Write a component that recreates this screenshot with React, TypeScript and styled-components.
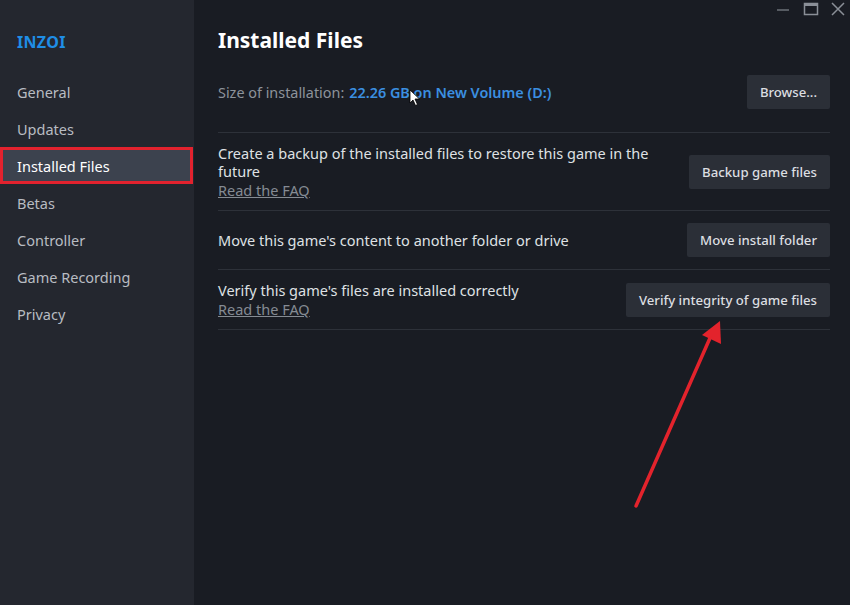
import React from "react";
import styled, { createGlobalStyle } from "styled-components";

const Global = createGlobalStyle`
  html, body { margin: 0; padding: 0; background: #191c23; }
  body { font-family: "Noto Sans", "Open Sans", Arial, sans-serif; }
  * { box-sizing: border-box; }
`;

const Shell = styled.div`
  position: relative;
  display: flex;
  width: 850px;
  height: 605px;
  overflow: hidden;
  background: #191c23;
`;

const Sidebar = styled.nav`
  width: 194px;
  flex: none;
  background: #24272f;
  padding-top: 28px;
  display: flex;
  flex-direction: column;
`;

const Logo = styled.div`
  color: #1f8ee6;
  font-weight: 700;
  font-size: 16px;
  letter-spacing: 0.3px;
  line-height: 28px;
  padding-left: 17px;
  margin-bottom: 17px;
`;

const NavItem = styled.div<{ $active?: boolean }>`
  height: 37px;
  display: flex;
  align-items: center;
  padding-left: ${(p) => (p.$active ? "14px" : "17px")};
  font-size: 14.5px;
  color: ${(p) => (p.$active ? "#ffffff" : "#b8bcc2")};
  background: ${(p) => (p.$active ? "#3c424e" : "transparent")};
  border: ${(p) => (p.$active ? "3px solid #e2222e" : "none")};
  margin-right: ${(p) => (p.$active ? "1px" : "0")};
`;

const Main = styled.main`
  flex: 1;
  padding: 26px 20px 0 24px;
  display: flex;
  flex-direction: column;
`;

const Title = styled.h1`
  margin: 0;
  font-size: 21px;
  line-height: 28px;
  font-weight: 700;
  color: #ffffff;
`;

const SizeRow = styled.div`
  margin-top: 20px;
  padding-bottom: 22px;
  display: flex;
  align-items: center;
  justify-content: space-between;
  border-bottom: 1px solid #2d3139;
`;

const SizeLabel = styled.span`
  font-size: 14.4px;
  color: #8d939b;
`;

const SizeValue = styled.span`
  color: #3b8fe0;
  font-weight: 600;
  margin-left: 5px;
`;

const Row = styled.div`
  display: flex;
  align-items: center;
  justify-content: space-between;
  padding: 11px 0 11px;
  border-bottom: 1px solid #2d3139;
  gap: 30px;
`;

const RowText = styled.div`
  font-size: 14.5px;
  line-height: 18px;
  color: #dfe1e4;
  max-width: 440px;
`;

const Faq = styled.a`
  display: block;
  margin-top: 1px;
  color: #858b93;
  text-decoration: underline;
  font-size: 14.5px;
  line-height: 18px;
`;

const Button = styled.button`
  flex: none;
  height: 34px;
  margin: 1px 0;
  padding: 0 13px;
  border: none;
  border-radius: 2px;
  background: #2b2f37;
  color: #dcdee1;
  font-family: inherit;
  font-size: 13.2px;
  font-weight: 500;
`;

const WindowControls = styled.div`
  position: absolute;
  top: 0;
  right: 0;
  display: flex;
  align-items: center;
  gap: 10px;
  padding: 1px 4px 0 0;
`;

const Arrow = styled.svg`
  position: absolute;
  left: 0;
  top: 0;
  pointer-events: none;
`;

const Cursor = styled.svg`
  position: absolute;
  left: 409px;
  top: 89px;
`;

export default function App() {
  const nav = ["General", "Updates", "Installed Files", "Betas", "Controller", "Game Recording", "Privacy"];
  return (
    <>
      <Global />
      <Shell>
        <Sidebar>
          <Logo>INZOI</Logo>
          {nav.map((n) => (
            <NavItem key={n} $active={n === "Installed Files"}>
              {n}
            </NavItem>
          ))}
        </Sidebar>
        <Main>
          <Title>Installed Files</Title>
          <SizeRow>
            <SizeLabel>
              Size of installation:<SizeValue>22.26 GB on New Volume (D:)</SizeValue>
            </SizeLabel>
            <Button>Browse...</Button>
          </SizeRow>
          <Row>
            <RowText>
              Create a backup of the installed files to restore this game in the future
              <Faq>Read the FAQ</Faq>
            </RowText>
            <Button>Backup game files</Button>
          </Row>
          <Row>
            <RowText>Move this game's content to another folder or drive</RowText>
            <Button>Move install folder</Button>
          </Row>
          <Row>
            <RowText>
              Verify this game's files are installed correctly
              <Faq>Read the FAQ</Faq>
            </RowText>
            <Button>Verify integrity of game files</Button>
          </Row>
        </Main>
        <WindowControls>
          <svg width="18" height="16" viewBox="0 0 18 16">
            <line x1="3" y1="9" x2="15" y2="9" stroke="#6b7079" strokeWidth="1.5" />
          </svg>
          <svg width="18" height="16" viewBox="0 0 18 16">
            <rect x="2.5" y="2.5" width="13" height="11" fill="none" stroke="#8a8f97" strokeWidth="1.5" />
            <line x1="2.5" y1="4" x2="15.5" y2="4" stroke="#8a8f97" strokeWidth="2" />
          </svg>
          <svg width="16" height="16" viewBox="0 0 16 16">
            <path d="M2 2 L14 14 M14 2 L2 14" stroke="#8a8f97" strokeWidth="1.5" />
          </svg>
        </WindowControls>
        <Cursor width="12" height="18" viewBox="0 0 12 18">
          <path d="M1 1 L1 14 L4 11 L6.5 16.5 L8.5 15.5 L6 10 L10.5 10 Z" fill="#ffffff" stroke="#000" strokeWidth="0.8" />
        </Cursor>
        <Arrow width="850" height="605" viewBox="0 0 850 605">
          <line x1="636" y1="506" x2="710" y2="338" stroke="#e3232c" strokeWidth="3.5" strokeLinecap="round" />
          <polygon points="720,321 702,335 721,344" fill="#e3232c" />
        </Arrow>
      </Shell>
    </>
  );
}
